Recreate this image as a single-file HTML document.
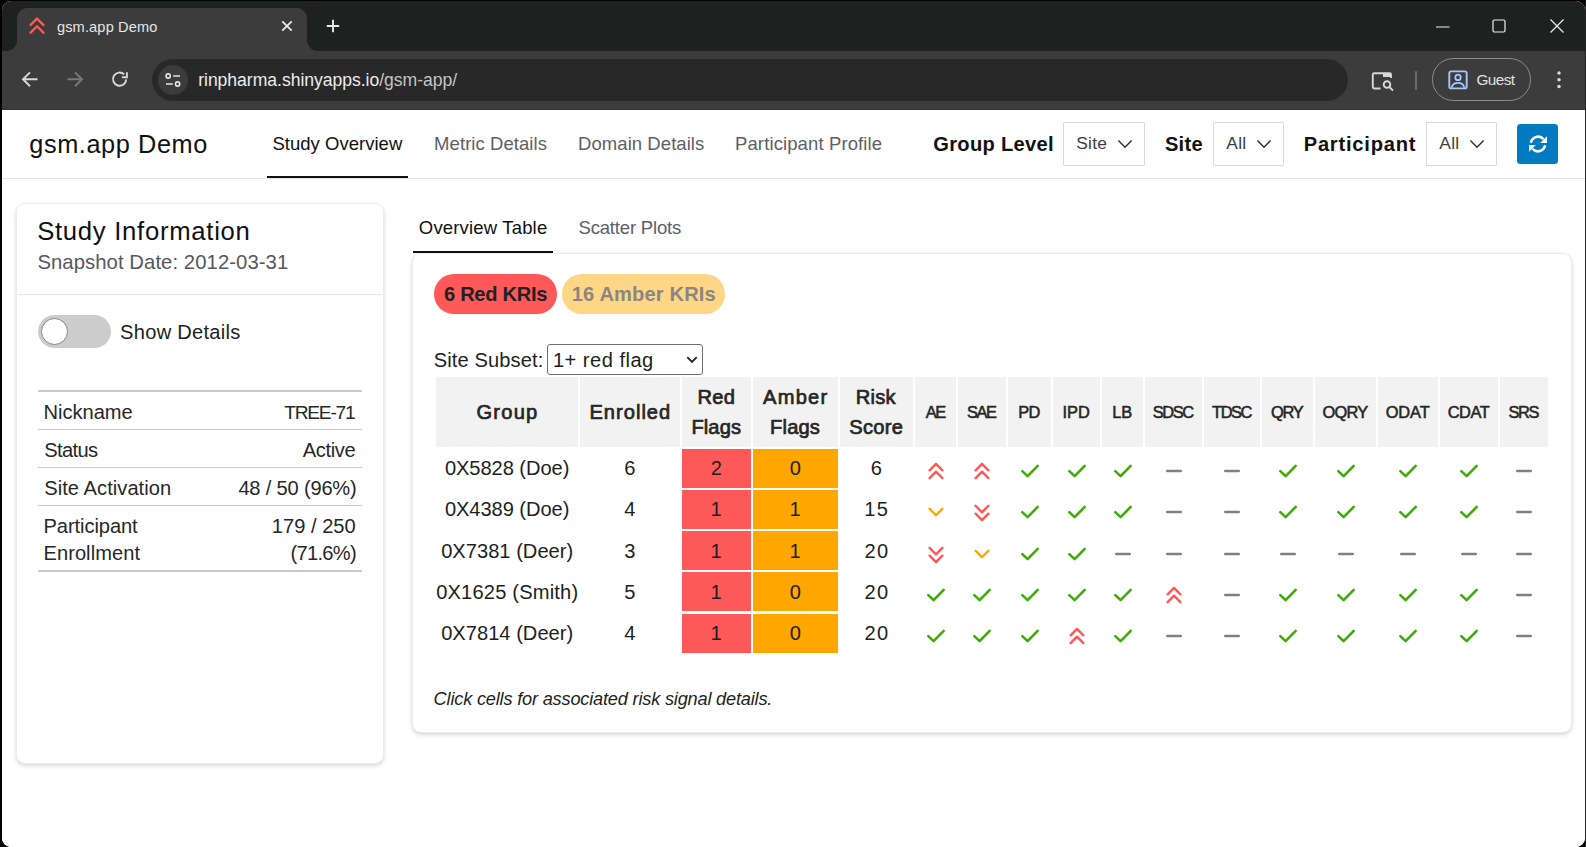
<!DOCTYPE html>
<html lang="en">
<head>
<meta charset="utf-8">
<title>gsm.app Demo</title>
<style>
*{box-sizing:border-box}
html,body{margin:0;padding:0;background:#000;overflow:hidden}
body{width:1586px;height:847px;position:relative;font-family:"Liberation Sans",sans-serif;color:#1d1f21}
.abs,.t{position:absolute}
.t{white-space:nowrap;line-height:1}
#win{position:absolute;left:1.5px;top:1px;width:1583.6px;height:846px;background:#fff;border-radius:9px;overflow:hidden}
#o{position:absolute;left:-1.5px;top:-1px;width:1586px;height:847px}
/* ---------- browser chrome ---------- */
#titlebar{position:absolute;left:0;top:0;width:100%;height:51px;background:#1f2020}
#tab{position:absolute;left:17px;top:8.2px;width:290.3px;height:42.6px;background:#3c3c3c;border-radius:10px 10px 0 0}
#tab:before,#tab:after{content:"";position:absolute;bottom:0;width:10px;height:10px}
#tab:before{left:-10px;background:radial-gradient(circle at 0 0,transparent 9.5px,#3c3c3c 10px)}
#tab:after{right:-10px;background:radial-gradient(circle at 100% 0,transparent 9.5px,#3c3c3c 10px)}
#toolbar{position:absolute;left:0;top:51px;width:100%;height:58px;background:#3c3c3c}
#tbline{position:absolute;left:0;top:109px;width:100%;height:1px;background:#343635}
#url{position:absolute;left:152.3px;top:58.9px;width:1196px;height:42px;border-radius:21px;background:#282828}
#sinfo{position:absolute;left:158px;top:65px;width:30px;height:30px;border-radius:15px;background:#3c3c3c}
#guest{position:absolute;left:1431.6px;top:58.4px;width:99.6px;height:42.6px;border-radius:21.3px;border:1.4px solid #8c8c8c}
svg.ab{position:absolute;overflow:visible}
/* ---------- page ---------- */
#page{position:absolute;left:0;top:110px;width:100%;height:738px;background:#fff}
#navline{position:absolute;left:0;top:178px;width:100%;height:1.3px;background:#e3e5ea}
.ul{position:absolute;height:2.2px;background:#111}
.sel{position:absolute;top:122.2px;height:44.2px;border:1px solid #d9d9d9;background:#fff;border-radius:1px}
#refresh{position:absolute;left:1517.2px;top:123.7px;width:40.8px;height:40px;border-radius:3.5px;background:#007bc2}
.card{position:absolute;background:#fff;border:1px solid #ececec;border-radius:9px;box-shadow:0 2px 5px rgba(0,0,0,.13),0 1px 2px rgba(0,0,0,.05)}
.hr{position:absolute;background:#c9c9c9;left:38.2px;width:323.7px}
.pill{position:absolute;top:274.1px;height:39.6px;border-radius:20px}
/* table */
.th{position:absolute;top:377.2px;height:69.7px;background:#f2f2f2}
.cell{position:absolute;height:39px}
svg.ic{position:absolute;overflow:visible}
</style>
</head>
<body>
<div class="abs" style="left:1585px;top:0;width:1px;height:847px;background:#222"></div>
<div id="win"><div id="o">
  <!-- ===== Browser chrome ===== -->
  <div id="titlebar"></div>
  <div id="toolbar"></div>
  <div id="tbline"></div>
  <div id="tab"></div>
  <svg class="ab" style="left:27.1px;top:14.8px" width="20" height="22" viewBox="0 0 20 22"><path d="M3.7 9.9 L10 3.6 L16.3 9.9 M3.7 17.6 L10 11.3 L16.3 17.6" fill="none" stroke="#ff5859" stroke-width="2.3" stroke-linecap="square"/></svg>
  <div class="t" style="left:56.92px;top:20.00px;font-size:14.6px;color:#e6e6e6;letter-spacing:0.144px;">gsm.app Demo</div>
  <svg class="ab" style="left:280.95px;top:19.95px" width="12" height="12" viewBox="0 0 12 12"><path d="M1.3 1.3 L10.7 10.7 M10.7 1.3 L1.3 10.7" stroke="#e8e8e8" stroke-width="1.9" fill="none"/></svg>
  <svg class="ab" style="left:325px;top:18px" width="16" height="16" viewBox="0 0 16 16"><path d="M8 1.7 V14.3 M1.8 8 H14.2" stroke="#e8e8e8" stroke-width="1.9" fill="none"/></svg>
  <!-- window controls -->
  <svg class="ab" style="left:1434.5px;top:18.5px" width="16" height="16" viewBox="0 0 16 16"><path d="M1 8 H14.5" stroke="#f0f0f0" stroke-width="1.1"/></svg>
  <svg class="ab" style="left:1491.4px;top:18.3px" width="16" height="16" viewBox="0 0 16 16"><rect x="2" y="2" width="12" height="12" rx="1.5" fill="none" stroke="#f0f0f0" stroke-width="1.2"/></svg>
  <svg class="ab" style="left:1548.5px;top:18.3px" width="16" height="16" viewBox="0 0 16 16"><path d="M1.5 1.5 L14.5 14.5 M14.5 1.5 L1.5 14.5" stroke="#f0f0f0" stroke-width="1.2"/></svg>
  <!-- nav buttons -->
  <svg class="ab" style="left:19.5px;top:69px" width="20" height="20" viewBox="0 0 20 20"><path d="M17.5 10.3 H3.5 M10 3.4 L3 10.3 L10 17.2" fill="none" stroke="#d8d8d8" stroke-width="1.9"/></svg>
  <svg class="ab" style="left:64.5px;top:69px" width="20" height="20" viewBox="0 0 20 20"><path d="M2.5 10.3 H16.5 M10 3.4 L17 10.3 L10 17.2" fill="none" stroke="#787878" stroke-width="1.9"/></svg>
  <svg class="ab" style="left:109.5px;top:69px" width="20" height="20" viewBox="0 0 20 20"><path d="M16.2 10.4 A6.6 6.6 0 1 1 14.2 5.4" fill="none" stroke="#d8d8d8" stroke-width="1.9"/><path d="M16.9 3.2 V8.2 H11.9" fill="none" stroke="#d8d8d8" stroke-width="1.9"/></svg>
  <div id="url"></div>
  <div id="sinfo"></div>
  <svg class="ab" style="left:163px;top:70px" width="20" height="20" viewBox="0 0 20 20"><circle cx="5.2" cy="6" r="2.1" fill="none" stroke="#e4e4e4" stroke-width="1.6"/><path d="M10.2 6 H17" stroke="#e4e4e4" stroke-width="1.7"/><circle cx="14.6" cy="14" r="2.1" fill="none" stroke="#e4e4e4" stroke-width="1.6"/><path d="M3 14 H9.8" stroke="#e4e4e4" stroke-width="1.7"/></svg>
  <div class="t" style="left:198.2px;top:72.4px;font-size:17.6px;color:#ececec;letter-spacing:-.04px">rinpharma.shinyapps.io<span style="color:#c4c4c4">/gsm-app/</span></div>
  <!-- right side toolbar -->
  <svg class="ab" style="left:1369.5px;top:69px" width="26" height="24" viewBox="0 0 26 24"><path d="M10.5 19.5 H4.2 A1.4 1.4 0 0 1 2.8 18.1 V5.6 A1.4 1.4 0 0 1 4.2 4.2 H19.6 A1.4 1.4 0 0 1 21 5.6 V9" fill="none" stroke="#d8d8d8" stroke-width="1.9"/><path d="M13 4.2 H21 V8 H13 Z" fill="#d8d8d8"/><circle cx="17" cy="15.5" r="3.3" fill="none" stroke="#d8d8d8" stroke-width="1.9"/><path d="M19.4 18 L23 21.6" stroke="#d8d8d8" stroke-width="1.9"/></svg>
  <div class="abs" style="left:1415px;top:70.5px;width:1.8px;height:19.5px;background:#6a6a6a;border-radius:1px"></div>
  <div id="guest"></div>
  <svg class="ab" style="left:1446.5px;top:68.6px" width="22" height="22" viewBox="0 0 22 22"><rect x="2.3" y="2.4" width="17.4" height="17" rx="2" fill="none" stroke="#a8c7fa" stroke-width="1.9"/><circle cx="11" cy="8.4" r="2.7" fill="none" stroke="#a8c7fa" stroke-width="1.8"/><path d="M4.6 18.6 C5.6 14.8 8 13.8 11 13.8 C14 13.8 16.4 14.8 17.4 18.6" fill="none" stroke="#a8c7fa" stroke-width="1.8"/></svg>
  <div class="t" style="left:1476.43px;top:72.00px;font-size:15.3px;color:#e0e0e0;letter-spacing:-0.558px;">Guest</div>
  <svg class="ab" style="left:1554.6px;top:69px" width="8" height="22" viewBox="0 0 8 22"><circle cx="4" cy="4.1" r="1.75" fill="#dadada"/><circle cx="4" cy="10.8" r="1.75" fill="#dadada"/><circle cx="4" cy="17.5" r="1.75" fill="#dadada"/></svg>

  <!-- ===== Page ===== -->
  <div id="page"></div>
  <div id="navline"></div>
  <div class="t" style="left:29.29px;top:132.00px;font-size:25.3px;color:#111;letter-spacing:0.590px;">gsm.app Demo</div>
  <div class="t" style="left:272.47px;top:135.00px;font-size:18.5px;color:#111;letter-spacing:0.018px;">Study Overview</div>
  <div class="ul" style="left:266.9px;top:176px;width:140.9px"></div>
  <div class="t" style="left:434.12px;top:135.00px;font-size:18.5px;color:#5d6066;letter-spacing:0.062px;">Metric Details</div>
  <div class="t" style="left:578.12px;top:135.00px;font-size:18.5px;color:#5d6066;letter-spacing:0.054px;">Domain Details</div>
  <div class="t" style="left:735.02px;top:135.00px;font-size:18.5px;color:#5d6066;letter-spacing:0.115px;">Participant Profile</div>
  <div class="t" style="left:933.30px;top:134.00px;font-size:20.1px;color:#111;letter-spacing:0.313px;font-weight:700;">Group Level</div>
  <div class="sel" style="left:1063.2px;width:81.5px"></div>
  <div class="t" style="left:1076.32px;top:135.00px;font-size:17.4px;color:#3a3e42;letter-spacing:0.184px;">Site</div>
  <svg class="ab" style="left:1117.1px;top:138.6px" width="16" height="10" viewBox="0 0 16 10"><path d="M1.4 1.6 L8 8.2 L14.6 1.6" fill="none" stroke="#2b2f33" stroke-width="1.4"/></svg>
  <div class="t" style="left:1164.90px;top:134.00px;font-size:20.1px;color:#111;letter-spacing:0.307px;font-weight:700;">Site</div>
  <div class="sel" style="left:1213.3px;width:70.5px"></div>
  <div class="t" style="left:1226.20px;top:135.00px;font-size:17.4px;color:#3a3e42;letter-spacing:0.358px;">All</div>
  <svg class="ab" style="left:1255.8px;top:138.6px" width="16" height="10" viewBox="0 0 16 10"><path d="M1.4 1.6 L8 8.2 L14.6 1.6" fill="none" stroke="#2b2f33" stroke-width="1.4"/></svg>
  <div class="t" style="left:1303.69px;top:134.00px;font-size:20.1px;color:#111;letter-spacing:0.789px;font-weight:700;">Participant</div>
  <div class="sel" style="left:1426.2px;width:70.5px"></div>
  <div class="t" style="left:1439.20px;top:135.00px;font-size:17.4px;color:#3a3e42;letter-spacing:0.358px;">All</div>
  <svg class="ab" style="left:1468.8px;top:138.6px" width="16" height="10" viewBox="0 0 16 10"><path d="M1.4 1.6 L8 8.2 L14.6 1.6" fill="none" stroke="#2b2f33" stroke-width="1.4"/></svg>
  <div id="refresh"></div>
  <svg class="ab" style="left:1527.6px;top:133.7px" width="20" height="20" viewBox="0 0 20 20"><path d="M2.9 8.7 A7.3 7.3 0 0 1 15.6 5.2" fill="none" stroke="#fff" stroke-width="2.5"/><path d="M19 2.3 V9.1 H12.2 Z" fill="#fff"/><path d="M17.1 11.3 A7.3 7.3 0 0 1 4.4 14.8" fill="none" stroke="#fff" stroke-width="2.5"/><path d="M1 17.7 V10.9 H7.8 Z" fill="#fff"/></svg>

  <!-- sidebar card -->
  <div class="card" style="left:16.2px;top:203.2px;width:367.8px;height:560.5px"></div>
  <div class="t" style="left:37.14px;top:219.00px;font-size:25.7px;color:#111;letter-spacing:0.715px;">Study Information</div>
  <div class="t" style="left:37.39px;top:252.00px;font-size:20.3px;color:#55585d;letter-spacing:0.068px;">Snapshot Date: 2012-03-31</div>
  <div class="abs" style="left:18.2px;top:293.7px;width:364.2px;height:1.2px;background:#e5e8ee"></div>
  <div class="abs" style="left:37.9px;top:314.8px;width:73px;height:32.9px;border-radius:17px;background:#cccccc"></div>
  <div class="abs" style="left:41.1px;top:317.8px;width:27px;height:27px;border-radius:14px;background:#fff;border:1.2px solid #858585"></div>
  <div class="t" style="left:120.10px;top:322.00px;font-size:20.1px;color:#1d1f21;letter-spacing:0.266px;">Show Details</div>
  <div class="hr" style="top:390px;height:2.2px"></div>
  <div class="t" style="left:43.49px;top:402.00px;font-size:20.1px;color:#25282b;letter-spacing:-0.005px;">Nickname</div> <div class="t" style="left:284.22px;top:403.00px;font-size:19.2px;color:#25282b;letter-spacing:-1.244px;">TREE-71</div>
  <div class="hr" style="top:428.8px;height:1.2px"></div>
  <div class="t" style="left:44.20px;top:440.00px;font-size:20.1px;color:#25282b;letter-spacing:-0.635px;">Status</div> <div class="t" style="left:302.80px;top:440.00px;font-size:20.1px;color:#25282b;letter-spacing:-0.374px;">Active</div>
  <div class="hr" style="top:466.8px;height:1.2px"></div>
  <div class="t" style="left:44.20px;top:478.00px;font-size:20.1px;color:#25282b;letter-spacing:0.056px;">Site Activation</div> <div class="t" style="left:238.40px;top:478.00px;font-size:20.1px;color:#25282b;letter-spacing:-0.191px;">48 / 50 (96%)</div>
  <div class="hr" style="top:504.8px;height:1.2px"></div>
  <div class="t" style="left:43.49px;top:516.00px;font-size:20.1px;color:#25282b;letter-spacing:-0.076px;">Participant</div> <div class="t" style="left:271.79px;top:516.00px;font-size:20.1px;color:#25282b;letter-spacing:0.012px;">179 / 250</div>
  <div class="t" style="left:43.49px;top:543.00px;font-size:20.1px;color:#25282b;letter-spacing:0.048px;">Enrollment</div> <div class="t" style="left:290.49px;top:543.00px;font-size:20.1px;color:#25282b;letter-spacing:-0.690px;">(71.6%)</div>
  <div class="hr" style="top:569.7px;height:2.2px"></div>

  <!-- main tabs -->
  <div class="t" style="left:418.87px;top:219.00px;font-size:18.5px;color:#111;letter-spacing:0.169px;">Overview Table</div>
  <div class="ul" style="left:412.9px;top:250.8px;width:140px"></div>
  <div class="t" style="left:578.47px;top:219.00px;font-size:18.5px;color:#5d6066;letter-spacing:-0.168px;">Scatter Plots</div>
  <div class="card" style="left:412.1px;top:253.2px;width:1160px;height:479.7px"></div>

  <div class="pill" style="left:434.1px;width:122.8px;background:#ff5859"></div>
  <div class="pill" style="left:562px;width:163.1px;background:#fed685"></div>
  <div class="t" style="left:444.00px;top:284.00px;font-size:20.1px;color:#222;letter-spacing:-0.302px;font-weight:700;">6 Red KRIs</div>
  <div class="t" style="left:571.79px;top:284.00px;font-size:20.1px;color:#8a8782;letter-spacing:0.150px;font-weight:700;">16 Amber KRIs</div>
  <div class="t" style="left:433.70px;top:350.00px;font-size:20.1px;color:#1d1f21;letter-spacing:0.107px;">Site Subset:</div>
  <div class="abs" style="left:547.3px;top:344.4px;width:155.6px;height:30.6px;border:1.2px solid #6f6f6f;border-radius:3px;background:#fff"></div>
  <div class="t" style="left:552.89px;top:350.00px;font-size:20.1px;color:#1d1f21;letter-spacing:0.484px;">1+ red flag</div>
  <svg class="ab" style="left:686.3px;top:355.4px" width="12" height="10" viewBox="0 0 12 10"><path d="M1.3 2.2 L6 7 L10.7 2.2" fill="none" stroke="#222" stroke-width="1.9"/></svg>

<div class="th" style="left:435.9px;width:142.1px"></div>
<div class="th" style="left:580px;width:99.8px"></div>
<div class="th" style="left:681.8px;width:69.3px"></div>
<div class="th" style="left:753px;width:85.0px"></div>
<div class="th" style="left:840px;width:73.0px"></div>
<div class="th" style="left:915px;width:41.2px"></div>
<div class="th" style="left:958px;width:48.0px"></div>
<div class="th" style="left:1008px;width:43.0px"></div>
<div class="th" style="left:1053.2px;width:46.6px"></div>
<div class="th" style="left:1102px;width:41.0px"></div>
<div class="th" style="left:1145.2px;width:56.6px"></div>
<div class="th" style="left:1204px;width:56.2px"></div>
<div class="th" style="left:1262px;width:51.0px"></div>
<div class="th" style="left:1315.2px;width:60.6px"></div>
<div class="th" style="left:1378px;width:59.9px"></div>
<div class="th" style="left:1440.1px;width:57.7px"></div>
<div class="th" style="left:1500px;width:48.0px"></div>
<div class="t" style="left:476.50px;top:402.00px;font-size:20.1px;color:#262626;letter-spacing:1.233px;-webkit-text-stroke:.7px #262626;">Group</div>
<div class="t" style="left:589.39px;top:402.00px;font-size:20.1px;color:#262626;letter-spacing:1.021px;-webkit-text-stroke:.7px #262626;">Enrolled</div>
<div class="t" style="left:697.39px;top:387.00px;font-size:20.1px;color:#262626;letter-spacing:0.365px;-webkit-text-stroke:.7px #262626;">Red</div>
<div class="t" style="left:691.39px;top:417.00px;font-size:20.1px;color:#262626;letter-spacing:0.117px;-webkit-text-stroke:.7px #262626;">Flags</div>
<div class="t" style="left:763.00px;top:387.00px;font-size:20.1px;color:#262626;letter-spacing:1.252px;-webkit-text-stroke:.7px #262626;">Amber</div>
<div class="t" style="left:770.09px;top:417.00px;font-size:20.1px;color:#262626;letter-spacing:0.167px;-webkit-text-stroke:.7px #262626;">Flags</div>
<div class="t" style="left:855.69px;top:387.00px;font-size:20.1px;color:#262626;letter-spacing:0.271px;-webkit-text-stroke:.7px #262626;">Risk</div>
<div class="t" style="left:849.30px;top:417.00px;font-size:20.1px;color:#262626;letter-spacing:0.312px;-webkit-text-stroke:.7px #262626;">Score</div>
<div class="t" style="left:925.72px;top:404.00px;font-size:16.4px;color:#262626;letter-spacing:-1.400px;-webkit-text-stroke:.55px #262626;">AE</div>
<div class="t" style="left:966.96px;top:404.00px;font-size:16.4px;color:#262626;letter-spacing:-1.400px;-webkit-text-stroke:.55px #262626;">SAE</div>
<div class="t" style="left:1018.14px;top:404.00px;font-size:16.4px;color:#262626;letter-spacing:-0.564px;-webkit-text-stroke:.55px #262626;">PD</div>
<div class="t" style="left:1062.42px;top:404.00px;font-size:16.4px;color:#262626;letter-spacing:0.054px;-webkit-text-stroke:.55px #262626;">IPD</div>
<div class="t" style="left:1112.24px;top:404.00px;font-size:16.4px;color:#262626;letter-spacing:0.024px;-webkit-text-stroke:.55px #262626;">LB</div>
<div class="t" style="left:1152.76px;top:404.00px;font-size:16.4px;color:#262626;letter-spacing:-1.400px;-webkit-text-stroke:.55px #262626;">SDSC</div>
<div class="t" style="left:1212.02px;top:404.00px;font-size:16.4px;color:#262626;letter-spacing:-1.400px;-webkit-text-stroke:.55px #262626;">TDSC</div>
<div class="t" style="left:1271.01px;top:404.00px;font-size:16.4px;color:#262626;letter-spacing:-1.306px;-webkit-text-stroke:.55px #262626;">QRY</div>
<div class="t" style="left:1322.51px;top:404.00px;font-size:16.4px;color:#262626;letter-spacing:-0.801px;-webkit-text-stroke:.55px #262626;">OQRY</div>
<div class="t" style="left:1385.71px;top:404.00px;font-size:16.4px;color:#262626;letter-spacing:-0.099px;-webkit-text-stroke:.55px #262626;">ODAT</div>
<div class="t" style="left:1447.63px;top:404.00px;font-size:16.4px;color:#262626;letter-spacing:-0.410px;-webkit-text-stroke:.55px #262626;">CDAT</div>
<div class="t" style="left:1508.55px;top:404.00px;font-size:16.4px;color:#262626;letter-spacing:-1.400px;-webkit-text-stroke:.55px #262626;">SRS</div>
<div class="cell" style="left:681.8px;width:69.3px;top:449.00px;background:#ff5859"></div>
<div class="cell" style="left:753px;width:85.0px;top:449.00px;background:#ffa600"></div>
<div class="t" style="left:444.90px;top:458.00px;font-size:20.1px;color:#1d1f21;letter-spacing:-0.056px;">0X5828 (Doe)</div>
<div class="t" style="left:624.22px;top:458.00px;font-size:20.1px;color:#1d1f21;">6</div>
<div class="t" style="left:710.87px;top:458.00px;font-size:20.1px;color:#1d1f21;">2</div>
<div class="t" style="left:789.87px;top:458.00px;font-size:20.1px;color:#1d1f21;">0</div>
<div class="t" style="left:870.82px;top:458.00px;font-size:20.1px;color:#1d1f21;">6</div>
<svg class="ic" style="left:925.6px;top:459.5px" width="20" height="22" viewBox="0 0 20 22"><path d="M3.6 10.3 L10 3.8 L16.4 10.3 M3.6 18.2 L10 11.7 L16.4 18.2" stroke="#ff5859" fill="none" stroke-width="2.4" stroke-linecap="round" stroke-linejoin="round"/></svg>
<svg class="ic" style="left:972.0px;top:459.5px" width="20" height="22" viewBox="0 0 20 22"><path d="M3.6 10.3 L10 3.8 L16.4 10.3 M3.6 18.2 L10 11.7 L16.4 18.2" stroke="#ff5859" fill="none" stroke-width="2.4" stroke-linecap="round" stroke-linejoin="round"/></svg>
<svg class="ic" style="left:1018.5px;top:459.8px" width="22" height="22" viewBox="0 0 22 22"><path d="M3.3 11.2 L8.6 16.2 L18.7 5.9" fill="none" stroke="#3cab05" stroke-width="2.5" stroke-linecap="round" stroke-linejoin="round"/></svg>
<svg class="ic" style="left:1065.5px;top:459.8px" width="22" height="22" viewBox="0 0 22 22"><path d="M3.3 11.2 L8.6 16.2 L18.7 5.9" fill="none" stroke="#3cab05" stroke-width="2.5" stroke-linecap="round" stroke-linejoin="round"/></svg>
<svg class="ic" style="left:1111.5px;top:459.8px" width="22" height="22" viewBox="0 0 22 22"><path d="M3.3 11.2 L8.6 16.2 L18.7 5.9" fill="none" stroke="#3cab05" stroke-width="2.5" stroke-linecap="round" stroke-linejoin="round"/></svg>
<svg class="ic" style="left:1162.5px;top:459.8px" width="22" height="22" viewBox="0 0 22 22"><path d="M4.1 11 L17.9 11" fill="none" stroke="#808080" stroke-width="2.3" stroke-linecap="round"/></svg>
<svg class="ic" style="left:1221.1px;top:459.8px" width="22" height="22" viewBox="0 0 22 22"><path d="M4.1 11 L17.9 11" fill="none" stroke="#808080" stroke-width="2.3" stroke-linecap="round"/></svg>
<svg class="ic" style="left:1276.5px;top:459.8px" width="22" height="22" viewBox="0 0 22 22"><path d="M3.3 11.2 L8.6 16.2 L18.7 5.9" fill="none" stroke="#3cab05" stroke-width="2.5" stroke-linecap="round" stroke-linejoin="round"/></svg>
<svg class="ic" style="left:1334.5px;top:459.8px" width="22" height="22" viewBox="0 0 22 22"><path d="M3.3 11.2 L8.6 16.2 L18.7 5.9" fill="none" stroke="#3cab05" stroke-width="2.5" stroke-linecap="round" stroke-linejoin="round"/></svg>
<svg class="ic" style="left:1397.0px;top:459.8px" width="22" height="22" viewBox="0 0 22 22"><path d="M3.3 11.2 L8.6 16.2 L18.7 5.9" fill="none" stroke="#3cab05" stroke-width="2.5" stroke-linecap="round" stroke-linejoin="round"/></svg>
<svg class="ic" style="left:1457.9px;top:459.8px" width="22" height="22" viewBox="0 0 22 22"><path d="M3.3 11.2 L8.6 16.2 L18.7 5.9" fill="none" stroke="#3cab05" stroke-width="2.5" stroke-linecap="round" stroke-linejoin="round"/></svg>
<svg class="ic" style="left:1513.0px;top:459.8px" width="22" height="22" viewBox="0 0 22 22"><path d="M4.1 11 L17.9 11" fill="none" stroke="#808080" stroke-width="2.3" stroke-linecap="round"/></svg>
<div class="cell" style="left:681.8px;width:69.3px;top:490.15px;background:#ff5859"></div>
<div class="cell" style="left:753px;width:85.0px;top:490.15px;background:#ffa600"></div>
<div class="t" style="left:444.90px;top:499.00px;font-size:20.1px;color:#1d1f21;letter-spacing:-0.056px;">0X4389 (Doe)</div>
<div class="t" style="left:624.37px;top:499.00px;font-size:20.1px;color:#1d1f21;">4</div>
<div class="t" style="left:710.57px;top:499.00px;font-size:20.1px;color:#1d1f21;">1</div>
<div class="t" style="left:789.62px;top:499.00px;font-size:20.1px;color:#1d1f21;">1</div>
<div class="t" style="left:864.34px;top:499.00px;font-size:20.1px;color:#1d1f21;letter-spacing:1.300px;">15</div>
<svg class="ic" style="left:925.6px;top:501.4px" width="20" height="22" viewBox="0 0 20 22"><path d="M3.6 7.75 L10 14.25 L16.4 7.75" stroke="#ffa600" fill="none" stroke-width="2.4" stroke-linecap="round" stroke-linejoin="round"/></svg>
<svg class="ic" style="left:972.0px;top:501.5px" width="20" height="22" viewBox="0 0 20 22"><path d="M3.6 3.8 L10 10.3 L16.4 3.8 M3.6 11.7 L10 18.2 L16.4 11.7" stroke="#ff5859" fill="none" stroke-width="2.4" stroke-linecap="round" stroke-linejoin="round"/></svg>
<svg class="ic" style="left:1018.5px;top:500.9px" width="22" height="22" viewBox="0 0 22 22"><path d="M3.3 11.2 L8.6 16.2 L18.7 5.9" fill="none" stroke="#3cab05" stroke-width="2.5" stroke-linecap="round" stroke-linejoin="round"/></svg>
<svg class="ic" style="left:1065.5px;top:500.9px" width="22" height="22" viewBox="0 0 22 22"><path d="M3.3 11.2 L8.6 16.2 L18.7 5.9" fill="none" stroke="#3cab05" stroke-width="2.5" stroke-linecap="round" stroke-linejoin="round"/></svg>
<svg class="ic" style="left:1111.5px;top:500.9px" width="22" height="22" viewBox="0 0 22 22"><path d="M3.3 11.2 L8.6 16.2 L18.7 5.9" fill="none" stroke="#3cab05" stroke-width="2.5" stroke-linecap="round" stroke-linejoin="round"/></svg>
<svg class="ic" style="left:1162.5px;top:500.9px" width="22" height="22" viewBox="0 0 22 22"><path d="M4.1 11 L17.9 11" fill="none" stroke="#808080" stroke-width="2.3" stroke-linecap="round"/></svg>
<svg class="ic" style="left:1221.1px;top:500.9px" width="22" height="22" viewBox="0 0 22 22"><path d="M4.1 11 L17.9 11" fill="none" stroke="#808080" stroke-width="2.3" stroke-linecap="round"/></svg>
<svg class="ic" style="left:1276.5px;top:500.9px" width="22" height="22" viewBox="0 0 22 22"><path d="M3.3 11.2 L8.6 16.2 L18.7 5.9" fill="none" stroke="#3cab05" stroke-width="2.5" stroke-linecap="round" stroke-linejoin="round"/></svg>
<svg class="ic" style="left:1334.5px;top:500.9px" width="22" height="22" viewBox="0 0 22 22"><path d="M3.3 11.2 L8.6 16.2 L18.7 5.9" fill="none" stroke="#3cab05" stroke-width="2.5" stroke-linecap="round" stroke-linejoin="round"/></svg>
<svg class="ic" style="left:1397.0px;top:500.9px" width="22" height="22" viewBox="0 0 22 22"><path d="M3.3 11.2 L8.6 16.2 L18.7 5.9" fill="none" stroke="#3cab05" stroke-width="2.5" stroke-linecap="round" stroke-linejoin="round"/></svg>
<svg class="ic" style="left:1457.9px;top:500.9px" width="22" height="22" viewBox="0 0 22 22"><path d="M3.3 11.2 L8.6 16.2 L18.7 5.9" fill="none" stroke="#3cab05" stroke-width="2.5" stroke-linecap="round" stroke-linejoin="round"/></svg>
<svg class="ic" style="left:1513.0px;top:500.9px" width="22" height="22" viewBox="0 0 22 22"><path d="M4.1 11 L17.9 11" fill="none" stroke="#808080" stroke-width="2.3" stroke-linecap="round"/></svg>
<div class="cell" style="left:681.8px;width:69.3px;top:531.30px;background:#ff5859"></div>
<div class="cell" style="left:753px;width:85.0px;top:531.30px;background:#ffa600"></div>
<div class="t" style="left:441.15px;top:541.00px;font-size:20.1px;color:#1d1f21;letter-spacing:0.021px;">0X7381 (Deer)</div>
<div class="t" style="left:624.37px;top:541.00px;font-size:20.1px;color:#1d1f21;">3</div>
<div class="t" style="left:710.57px;top:541.00px;font-size:20.1px;color:#1d1f21;">1</div>
<div class="t" style="left:789.62px;top:541.00px;font-size:20.1px;color:#1d1f21;">1</div>
<div class="t" style="left:864.60px;top:541.00px;font-size:20.1px;color:#1d1f21;letter-spacing:1.197px;">20</div>
<svg class="ic" style="left:925.6px;top:543.6px" width="20" height="22" viewBox="0 0 20 22"><path d="M3.6 3.8 L10 10.3 L16.4 3.8 M3.6 11.7 L10 18.2 L16.4 11.7" stroke="#ff5859" fill="none" stroke-width="2.4" stroke-linecap="round" stroke-linejoin="round"/></svg>
<svg class="ic" style="left:972.0px;top:543.4px" width="20" height="22" viewBox="0 0 20 22"><path d="M3.6 7.75 L10 14.25 L16.4 7.75" stroke="#ffa600" fill="none" stroke-width="2.4" stroke-linecap="round" stroke-linejoin="round"/></svg>
<svg class="ic" style="left:1018.5px;top:543.0px" width="22" height="22" viewBox="0 0 22 22"><path d="M3.3 11.2 L8.6 16.2 L18.7 5.9" fill="none" stroke="#3cab05" stroke-width="2.5" stroke-linecap="round" stroke-linejoin="round"/></svg>
<svg class="ic" style="left:1065.5px;top:543.0px" width="22" height="22" viewBox="0 0 22 22"><path d="M3.3 11.2 L8.6 16.2 L18.7 5.9" fill="none" stroke="#3cab05" stroke-width="2.5" stroke-linecap="round" stroke-linejoin="round"/></svg>
<svg class="ic" style="left:1111.5px;top:543.0px" width="22" height="22" viewBox="0 0 22 22"><path d="M4.1 11 L17.9 11" fill="none" stroke="#808080" stroke-width="2.3" stroke-linecap="round"/></svg>
<svg class="ic" style="left:1162.5px;top:543.0px" width="22" height="22" viewBox="0 0 22 22"><path d="M4.1 11 L17.9 11" fill="none" stroke="#808080" stroke-width="2.3" stroke-linecap="round"/></svg>
<svg class="ic" style="left:1221.1px;top:543.0px" width="22" height="22" viewBox="0 0 22 22"><path d="M4.1 11 L17.9 11" fill="none" stroke="#808080" stroke-width="2.3" stroke-linecap="round"/></svg>
<svg class="ic" style="left:1276.5px;top:543.0px" width="22" height="22" viewBox="0 0 22 22"><path d="M4.1 11 L17.9 11" fill="none" stroke="#808080" stroke-width="2.3" stroke-linecap="round"/></svg>
<svg class="ic" style="left:1334.5px;top:543.0px" width="22" height="22" viewBox="0 0 22 22"><path d="M4.1 11 L17.9 11" fill="none" stroke="#808080" stroke-width="2.3" stroke-linecap="round"/></svg>
<svg class="ic" style="left:1397.0px;top:543.0px" width="22" height="22" viewBox="0 0 22 22"><path d="M4.1 11 L17.9 11" fill="none" stroke="#808080" stroke-width="2.3" stroke-linecap="round"/></svg>
<svg class="ic" style="left:1457.9px;top:543.0px" width="22" height="22" viewBox="0 0 22 22"><path d="M4.1 11 L17.9 11" fill="none" stroke="#808080" stroke-width="2.3" stroke-linecap="round"/></svg>
<svg class="ic" style="left:1513.0px;top:543.0px" width="22" height="22" viewBox="0 0 22 22"><path d="M4.1 11 L17.9 11" fill="none" stroke="#808080" stroke-width="2.3" stroke-linecap="round"/></svg>
<div class="cell" style="left:681.8px;width:69.3px;top:572.45px;background:#ff5859"></div>
<div class="cell" style="left:753px;width:85.0px;top:572.45px;background:#ffa600"></div>
<div class="t" style="left:436.15px;top:582.00px;font-size:20.1px;color:#1d1f21;letter-spacing:0.186px;">0X1625 (Smith)</div>
<div class="t" style="left:624.32px;top:582.00px;font-size:20.1px;color:#1d1f21;">5</div>
<div class="t" style="left:710.57px;top:582.00px;font-size:20.1px;color:#1d1f21;">1</div>
<div class="t" style="left:789.87px;top:582.00px;font-size:20.1px;color:#1d1f21;">0</div>
<div class="t" style="left:864.60px;top:582.00px;font-size:20.1px;color:#1d1f21;letter-spacing:1.197px;">20</div>
<svg class="ic" style="left:924.6px;top:584.1px" width="22" height="22" viewBox="0 0 22 22"><path d="M3.3 11.2 L8.6 16.2 L18.7 5.9" fill="none" stroke="#3cab05" stroke-width="2.5" stroke-linecap="round" stroke-linejoin="round"/></svg>
<svg class="ic" style="left:971.0px;top:584.1px" width="22" height="22" viewBox="0 0 22 22"><path d="M3.3 11.2 L8.6 16.2 L18.7 5.9" fill="none" stroke="#3cab05" stroke-width="2.5" stroke-linecap="round" stroke-linejoin="round"/></svg>
<svg class="ic" style="left:1018.5px;top:584.1px" width="22" height="22" viewBox="0 0 22 22"><path d="M3.3 11.2 L8.6 16.2 L18.7 5.9" fill="none" stroke="#3cab05" stroke-width="2.5" stroke-linecap="round" stroke-linejoin="round"/></svg>
<svg class="ic" style="left:1065.5px;top:584.1px" width="22" height="22" viewBox="0 0 22 22"><path d="M3.3 11.2 L8.6 16.2 L18.7 5.9" fill="none" stroke="#3cab05" stroke-width="2.5" stroke-linecap="round" stroke-linejoin="round"/></svg>
<svg class="ic" style="left:1111.5px;top:584.1px" width="22" height="22" viewBox="0 0 22 22"><path d="M3.3 11.2 L8.6 16.2 L18.7 5.9" fill="none" stroke="#3cab05" stroke-width="2.5" stroke-linecap="round" stroke-linejoin="round"/></svg>
<svg class="ic" style="left:1163.5px;top:583.9px" width="20" height="22" viewBox="0 0 20 22"><path d="M3.6 10.3 L10 3.8 L16.4 10.3 M3.6 18.2 L10 11.7 L16.4 18.2" stroke="#ff5859" fill="none" stroke-width="2.4" stroke-linecap="round" stroke-linejoin="round"/></svg>
<svg class="ic" style="left:1221.1px;top:584.1px" width="22" height="22" viewBox="0 0 22 22"><path d="M4.1 11 L17.9 11" fill="none" stroke="#808080" stroke-width="2.3" stroke-linecap="round"/></svg>
<svg class="ic" style="left:1276.5px;top:584.1px" width="22" height="22" viewBox="0 0 22 22"><path d="M3.3 11.2 L8.6 16.2 L18.7 5.9" fill="none" stroke="#3cab05" stroke-width="2.5" stroke-linecap="round" stroke-linejoin="round"/></svg>
<svg class="ic" style="left:1334.5px;top:584.1px" width="22" height="22" viewBox="0 0 22 22"><path d="M3.3 11.2 L8.6 16.2 L18.7 5.9" fill="none" stroke="#3cab05" stroke-width="2.5" stroke-linecap="round" stroke-linejoin="round"/></svg>
<svg class="ic" style="left:1397.0px;top:584.1px" width="22" height="22" viewBox="0 0 22 22"><path d="M3.3 11.2 L8.6 16.2 L18.7 5.9" fill="none" stroke="#3cab05" stroke-width="2.5" stroke-linecap="round" stroke-linejoin="round"/></svg>
<svg class="ic" style="left:1457.9px;top:584.1px" width="22" height="22" viewBox="0 0 22 22"><path d="M3.3 11.2 L8.6 16.2 L18.7 5.9" fill="none" stroke="#3cab05" stroke-width="2.5" stroke-linecap="round" stroke-linejoin="round"/></svg>
<svg class="ic" style="left:1513.0px;top:584.1px" width="22" height="22" viewBox="0 0 22 22"><path d="M4.1 11 L17.9 11" fill="none" stroke="#808080" stroke-width="2.3" stroke-linecap="round"/></svg>
<div class="cell" style="left:681.8px;width:69.3px;top:613.60px;background:#ff5859"></div>
<div class="cell" style="left:753px;width:85.0px;top:613.60px;background:#ffa600"></div>
<div class="t" style="left:441.15px;top:623.00px;font-size:20.1px;color:#1d1f21;letter-spacing:0.021px;">0X7814 (Deer)</div>
<div class="t" style="left:624.37px;top:623.00px;font-size:20.1px;color:#1d1f21;">4</div>
<div class="t" style="left:710.57px;top:623.00px;font-size:20.1px;color:#1d1f21;">1</div>
<div class="t" style="left:789.87px;top:623.00px;font-size:20.1px;color:#1d1f21;">0</div>
<div class="t" style="left:864.60px;top:623.00px;font-size:20.1px;color:#1d1f21;letter-spacing:1.197px;">20</div>
<svg class="ic" style="left:924.6px;top:625.3px" width="22" height="22" viewBox="0 0 22 22"><path d="M3.3 11.2 L8.6 16.2 L18.7 5.9" fill="none" stroke="#3cab05" stroke-width="2.5" stroke-linecap="round" stroke-linejoin="round"/></svg>
<svg class="ic" style="left:971.0px;top:625.3px" width="22" height="22" viewBox="0 0 22 22"><path d="M3.3 11.2 L8.6 16.2 L18.7 5.9" fill="none" stroke="#3cab05" stroke-width="2.5" stroke-linecap="round" stroke-linejoin="round"/></svg>
<svg class="ic" style="left:1018.5px;top:625.3px" width="22" height="22" viewBox="0 0 22 22"><path d="M3.3 11.2 L8.6 16.2 L18.7 5.9" fill="none" stroke="#3cab05" stroke-width="2.5" stroke-linecap="round" stroke-linejoin="round"/></svg>
<svg class="ic" style="left:1066.5px;top:625.0px" width="20" height="22" viewBox="0 0 20 22"><path d="M3.6 10.3 L10 3.8 L16.4 10.3 M3.6 18.2 L10 11.7 L16.4 18.2" stroke="#ff5859" fill="none" stroke-width="2.4" stroke-linecap="round" stroke-linejoin="round"/></svg>
<svg class="ic" style="left:1111.5px;top:625.3px" width="22" height="22" viewBox="0 0 22 22"><path d="M3.3 11.2 L8.6 16.2 L18.7 5.9" fill="none" stroke="#3cab05" stroke-width="2.5" stroke-linecap="round" stroke-linejoin="round"/></svg>
<svg class="ic" style="left:1162.5px;top:625.3px" width="22" height="22" viewBox="0 0 22 22"><path d="M4.1 11 L17.9 11" fill="none" stroke="#808080" stroke-width="2.3" stroke-linecap="round"/></svg>
<svg class="ic" style="left:1221.1px;top:625.3px" width="22" height="22" viewBox="0 0 22 22"><path d="M4.1 11 L17.9 11" fill="none" stroke="#808080" stroke-width="2.3" stroke-linecap="round"/></svg>
<svg class="ic" style="left:1276.5px;top:625.3px" width="22" height="22" viewBox="0 0 22 22"><path d="M3.3 11.2 L8.6 16.2 L18.7 5.9" fill="none" stroke="#3cab05" stroke-width="2.5" stroke-linecap="round" stroke-linejoin="round"/></svg>
<svg class="ic" style="left:1334.5px;top:625.3px" width="22" height="22" viewBox="0 0 22 22"><path d="M3.3 11.2 L8.6 16.2 L18.7 5.9" fill="none" stroke="#3cab05" stroke-width="2.5" stroke-linecap="round" stroke-linejoin="round"/></svg>
<svg class="ic" style="left:1397.0px;top:625.3px" width="22" height="22" viewBox="0 0 22 22"><path d="M3.3 11.2 L8.6 16.2 L18.7 5.9" fill="none" stroke="#3cab05" stroke-width="2.5" stroke-linecap="round" stroke-linejoin="round"/></svg>
<svg class="ic" style="left:1457.9px;top:625.3px" width="22" height="22" viewBox="0 0 22 22"><path d="M3.3 11.2 L8.6 16.2 L18.7 5.9" fill="none" stroke="#3cab05" stroke-width="2.5" stroke-linecap="round" stroke-linejoin="round"/></svg>
<svg class="ic" style="left:1513.0px;top:625.3px" width="22" height="22" viewBox="0 0 22 22"><path d="M4.1 11 L17.9 11" fill="none" stroke="#808080" stroke-width="2.3" stroke-linecap="round"/></svg>

  <div class="t" style="left:433.60px;top:690.00px;font-size:18.2px;color:#1d1f21;letter-spacing:-0.194px;font-style:italic;">Click cells for associated risk signal details.</div>
</div></div>
</body>
</html>
